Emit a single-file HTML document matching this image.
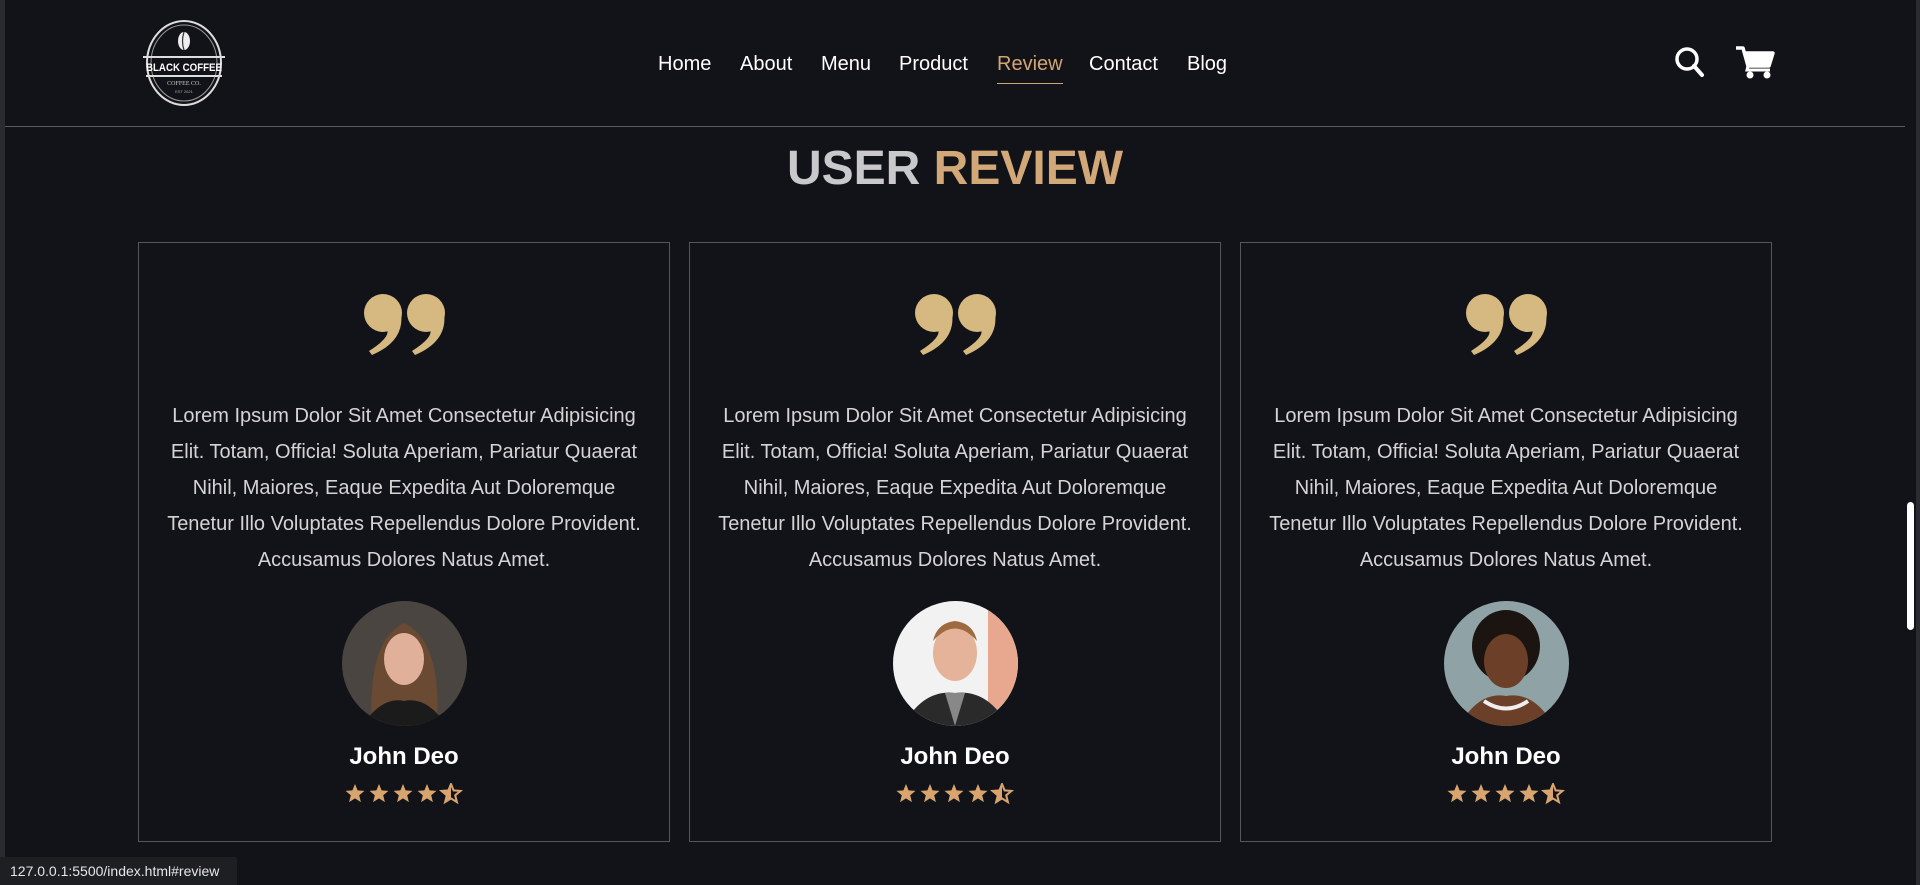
<!DOCTYPE html>
<html><head><meta charset="utf-8"><style>
*{margin:0;padding:0;box-sizing:border-box}
html,body{width:1920px;height:885px;overflow:hidden;background:#121318;font-family:"Liberation Sans",sans-serif}
.frame{position:absolute;left:0;top:0;width:1920px;height:885px;border-left:5px solid #2a2b30;border-right:4px solid #2a2b30}
.hdr{position:absolute;left:5px;top:126px;width:1900px;height:1px;background:#5a5b60}
.logo{position:absolute;left:138px;top:16px}
.nav{position:absolute;top:53px;font-size:20px;color:#fff}
.nav span{position:absolute;white-space:nowrap}
.nav .act{color:#d4a574}
.nav .act:after{content:"";position:absolute;left:0;right:0;top:30px;height:1px;background:#d4a574}
h1{position:absolute;left:0;width:1910px;text-align:center;top:141px;font-size:48px;font-weight:bold;color:#c9c9cb}
h1 b{color:#d2a878}
.card{position:absolute;top:242px;width:532px;height:600px;border:1px solid #55565c;text-align:center}
.q{position:absolute;left:0;top:0;width:532px;height:130px}
.txt{position:absolute;left:22px;right:22px;top:155px;font-size:20px;line-height:36px;color:#d4d4d6}
.av{position:absolute;left:203px;top:358px;width:125px;height:125px;border-radius:50%;overflow:hidden}
.nm{position:absolute;left:0;right:0;top:500px;font-size:24px;font-weight:bold;color:#fff}
.st{position:absolute;left:206px;top:540px}
.status{position:absolute;left:0;top:857px;width:237px;height:28px;background:#1e1f23;color:#e6e6e6;font-size:14px;line-height:28px;padding-left:10px;border-top-right-radius:3px}
.sb{position:absolute;left:1907px;top:502px;width:7px;height:128px;background:#fff;border-radius:4px}
</style></head><body>
<div class="frame"></div>
<div class="hdr"></div>
<svg class="logo" width="92" height="94" viewBox="0 0 92 94">
<defs>
<path id="s" d="M10 1 L12.6 7.4 L19.5 7.9 L14.2 12.3 L15.9 19.1 L10 15.4 L4.1 19.1 L5.8 12.3 L0.5 7.9 L7.4 7.4Z"/>
<g id="qq" fill="#d6b981"><circle cx="244" cy="70" r="19"/><path d="M262 70 Q266 98 233 112 L230 108 Q252 94 248 86 Z"/><circle cx="287" cy="70" r="19"/><path d="M305 70 Q309 98 276 112 L273 108 Q295 94 291 86 Z"/></g>
</defs>
<ellipse cx="46" cy="47" rx="37" ry="42" fill="none" stroke="#ddd" stroke-width="2"/>
<ellipse cx="46" cy="47" rx="33" ry="38" fill="none" stroke="#999" stroke-width="1"/>
<ellipse cx="46" cy="25" rx="6" ry="9" fill="#eee"/>
<path d="M46 16 Q43 25 46 34" stroke="#333" fill="none" stroke-width="1.2"/>
<rect x="5" y="40" width="82" height="2" fill="#ddd"/>
<text x="46" y="55" text-anchor="middle" font-weight="bold" font-size="11" fill="#fff" textLength="76" lengthAdjust="spacingAndGlyphs">BLACK COFFEE</text>
<rect x="8" y="59" width="76" height="2" fill="#ddd"/>
<text x="46" y="69" text-anchor="middle" font-size="6" fill="#ccc" font-family="Liberation Serif,serif">COFFEE CO.</text>
<text x="46" y="77" text-anchor="middle" font-size="4" fill="#aaa">EST 2021</text>
</svg>
<div class="nav">
<span style="left:658px">Home</span><span style="left:740px">About</span><span style="left:821px">Menu</span><span style="left:899px">Product</span><span class="act" style="left:997px">Review</span><span style="left:1089px">Contact</span><span style="left:1187px">Blog</span>
</div>
<svg style="position:absolute;left:1672px;top:44px" width="34" height="36" viewBox="0 0 34 36"><circle cx="15" cy="15" r="10" fill="none" stroke="#fff" stroke-width="3.5"/><path d="M22 22 L30 31" stroke="#fff" stroke-width="4" stroke-linecap="round"/></svg>
<svg style="position:absolute;left:1735px;top:44px" width="40" height="36" viewBox="0 0 40 36"><path d="M1 4 H8 L13 22 H34 L38 9 H10" fill="none" stroke="#fff" stroke-width="3.5" stroke-linejoin="round"/><path d="M10 9 H38 L34 22 H13 Z" fill="#fff"/><path d="M13 22 L12 26 H35" fill="none" stroke="#fff" stroke-width="3"/><circle cx="15" cy="31" r="3.5" fill="#fff"/><circle cx="32" cy="31" r="3.5" fill="#fff"/></svg>
<h1>USER <b>REVIEW</b></h1>

<div class="card" style="left:138px">
<svg class="q" viewBox="0 0 532 130"><use href="#qq"/></svg>
<div class="txt">Lorem Ipsum Dolor Sit Amet Consectetur Adipisicing Elit. Totam, Officia! Soluta Aperiam, Pariatur Quaerat Nihil, Maiores, Eaque Expedita Aut Doloremque Tenetur Illo Voluptates Repellendus Dolore Provident. Accusamus Dolores Natus Amet.</div>
<div class="av" style="background:#4a4541"><svg width="125" height="125"><path d="M30 125 Q25 40 62 22 Q100 40 95 125Z" fill="#6b4a33"/><ellipse cx="62" cy="58" rx="20" ry="26" fill="#e0b09a"/><path d="M20 125 Q40 95 62 100 Q85 95 105 125Z" fill="#1b1b1b"/></svg></div>
<div class="nm">John Deo</div>
<svg class="st" width="120" height="22" viewBox="0 0 120 22"><g fill="#d9a56f"><use href="#s"/><use href="#s" x="24"/><use href="#s" x="48"/><use href="#s" x="72"/><path d="M106 1 L108.6 7.4 L115.5 7.9 L110.2 12.3 L111.9 19.1 L106 15.4 L100.1 19.1 L101.8 12.3 L96.5 7.9 L103.4 7.4Z" fill="none" stroke="#d9a56f" stroke-width="2"/><path d="M106 1 L106 15.4 L100.1 19.1 L101.8 12.3 L96.5 7.9 L103.4 7.4Z"/></g></svg>
</div>

<div class="card" style="left:689px">
<svg class="q" viewBox="0 0 532 130"><use href="#qq"/></svg>
<div class="txt">Lorem Ipsum Dolor Sit Amet Consectetur Adipisicing Elit. Totam, Officia! Soluta Aperiam, Pariatur Quaerat Nihil, Maiores, Eaque Expedita Aut Doloremque Tenetur Illo Voluptates Repellendus Dolore Provident. Accusamus Dolores Natus Amet.</div>
<div class="av" style="background:#f2f2f2"><svg width="125" height="125"><rect x="95" y="0" width="30" height="125" fill="#e8a890"/><ellipse cx="62" cy="52" rx="22" ry="28" fill="#e4b39a"/><path d="M40 40 Q62 15 84 40 Q80 22 62 20 Q44 22 40 40Z" fill="#a06a40"/><path d="M10 125 Q30 88 62 92 Q95 88 115 125Z" fill="#2a2a2a"/><path d="M52 92 L62 125 L72 92Z" fill="#888"/></svg></div>
<div class="nm">John Deo</div>
<svg class="st" width="120" height="22" viewBox="0 0 120 22"><g fill="#d9a56f"><use href="#s"/><use href="#s" x="24"/><use href="#s" x="48"/><use href="#s" x="72"/><path d="M106 1 L108.6 7.4 L115.5 7.9 L110.2 12.3 L111.9 19.1 L106 15.4 L100.1 19.1 L101.8 12.3 L96.5 7.9 L103.4 7.4Z" fill="none" stroke="#d9a56f" stroke-width="2"/><path d="M106 1 L106 15.4 L100.1 19.1 L101.8 12.3 L96.5 7.9 L103.4 7.4Z"/></g></svg>
</div>

<div class="card" style="left:1240px">
<svg class="q" viewBox="0 0 532 130"><use href="#qq"/></svg>
<div class="txt">Lorem Ipsum Dolor Sit Amet Consectetur Adipisicing Elit. Totam, Officia! Soluta Aperiam, Pariatur Quaerat Nihil, Maiores, Eaque Expedita Aut Doloremque Tenetur Illo Voluptates Repellendus Dolore Provident. Accusamus Dolores Natus Amet.</div>
<div class="av" style="background:#8fa3a6"><svg width="125" height="125"><ellipse cx="62" cy="45" rx="34" ry="36" fill="#1c1410"/><ellipse cx="62" cy="60" rx="22" ry="27" fill="#6b3f28"/><path d="M15 125 Q35 90 62 95 Q90 90 110 125Z" fill="#6b3f28"/><path d="M40 100 Q62 115 84 100" stroke="#eee" stroke-width="4" fill="none"/></svg></div>
<div class="nm">John Deo</div>
<svg class="st" width="120" height="22" viewBox="0 0 120 22"><g fill="#d9a56f"><use href="#s"/><use href="#s" x="24"/><use href="#s" x="48"/><use href="#s" x="72"/><path d="M106 1 L108.6 7.4 L115.5 7.9 L110.2 12.3 L111.9 19.1 L106 15.4 L100.1 19.1 L101.8 12.3 L96.5 7.9 L103.4 7.4Z" fill="none" stroke="#d9a56f" stroke-width="2"/><path d="M106 1 L106 15.4 L100.1 19.1 L101.8 12.3 L96.5 7.9 L103.4 7.4Z"/></g></svg>
</div>

<div class="sb"></div>
<div class="status">127.0.0.1:5500/index.html#review</div>
</body></html>
